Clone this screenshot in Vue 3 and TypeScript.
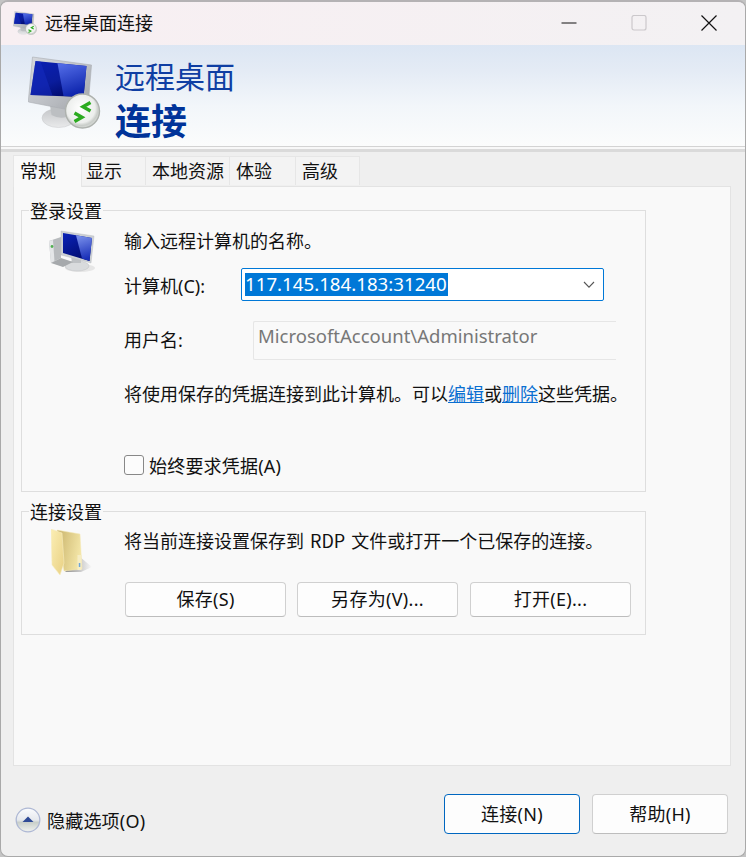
<script setup lang="ts">
interface Tab { label: string; width: number; active?: boolean }
const tabs: Tab[] = [
  { label: '常规', width: 69, active: true },
  { label: '显示', width: 64 },
  { label: '本地资源', width: 84 },
  { label: '体验', width: 66 },
  { label: '高级', width: 64 },
]
</script>

<template>
  <div class="window">
    <header class="titlebar">
      <svg class="title-icon" width="24" height="24" viewBox="0 0 73 73">
        <use href="#rdp-icon" />
      </svg>
      <span class="title">远程桌面连接</span>
      <div class="controls">
        <svg width="16" height="16" viewBox="0 0 16 16" class="ctl"><path d="M0.5 8H15.5" stroke="#111" stroke-width="1" /></svg>
        <svg width="16" height="16" viewBox="0 0 16 16" class="ctl"><rect x="1" y="0.5" width="14" height="14.5" rx="2" fill="none" stroke="#cbc8cb" stroke-width="1.2" /></svg>
        <svg width="16" height="16" viewBox="0 0 16 16" class="ctl"><path d="M0.5 0.5L15.5 15.5M15.5 0.5L0.5 15.5" stroke="#111" stroke-width="1.2" /></svg>
      </div>
    </header>

    <section class="banner">
      <svg width="74" height="73" viewBox="0 0 73 73" class="banner-icon">
        <defs>
          <linearGradient id="scr" x1="0" y1="0" x2="0.6" y2="1">
            <stop offset="0" stop-color="#0a1fb4" />
            <stop offset="0.6" stop-color="#0a1c9c" />
            <stop offset="1" stop-color="#000a6c" />
          </linearGradient>
          <linearGradient id="scrl" x1="0" y1="0" x2="0.3" y2="1">
            <stop offset="0" stop-color="#5670ea" />
            <stop offset="1" stop-color="#0f26ae" />
          </linearGradient>
          <linearGradient id="frame" x1="0" y1="0" x2="1" y2="1">
            <stop offset="0" stop-color="#d6d9de" />
            <stop offset="0.5" stop-color="#bfc2c7" />
            <stop offset="1" stop-color="#9ea1a6" />
          </linearGradient>
          <radialGradient id="disc" cx="0.45" cy="0.42" r="0.62">
            <stop offset="0" stop-color="#ffffff" />
            <stop offset="0.68" stop-color="#eceeec" />
            <stop offset="0.82" stop-color="#c9cdc9" />
            <stop offset="1" stop-color="#dfe2df" />
          </radialGradient>
          <linearGradient id="base" x1="0" y1="0" x2="0" y2="1">
            <stop offset="0" stop-color="#c4c6c9" />
            <stop offset="1" stop-color="#e9eaeb" />
          </linearGradient>
          <g id="rdp-icon">
            <ellipse cx="31" cy="62" rx="16.5" ry="9.5" fill="url(#base)" stroke="#c8cacc" stroke-width="0.5" />
            <path d="M22 46L40 50L39 61Q31 63 24 59Z" fill="#bcbfc2" />
            <path d="M5 1L64 9L61 45L52 56L1 46L1 43Z" fill="url(#frame)" stroke="#a9acb1" stroke-width="0.6" />
            <path d="M8 5L59 10L56 41L3 39Z" fill="url(#scr)" />
            <path d="M30 7.2L59 10L56 41L36 40Z" fill="url(#scrl)" />
            <path d="M8 5L13 5.5L25 39.5L3 39Z" fill="#152cc0" opacity="0.55" />
            <circle cx="55" cy="55" r="17" fill="url(#disc)" stroke="#aeb2ae" stroke-width="1.4" />
            <path d="M47 57L54.5 61.2L47 65.5M63 46.5L55.5 50.8L63 55" fill="none" stroke="#2cab20" stroke-width="3.4" />
          </g>
        </defs>
        <use href="#rdp-icon" />
      </svg>
      <div class="banner-text">
        <div class="h-light">远程桌面</div>
        <div class="h-bold">连接</div>
      </div>
    </section>
    <div class="rule"></div>

    <main class="content">
      <nav class="tabs">
        <div
          v-for="t in tabs"
          :key="t.label"
          class="tab"
          :class="{ active: t.active }"
          :style="{ width: t.width + 'px' }"
        >{{ t.label }}</div>
      </nav>

      <div class="panel">
        <fieldset class="group group-login">
          <legend>登录设置</legend>
          <svg class="pc-icon" width="50" height="46" viewBox="0 0 50 46">
            <defs>
              <linearGradient id="scr2" x1="0" y1="0" x2="0.6" y2="1">
                <stop offset="0" stop-color="#0a22b8" />
                <stop offset="1" stop-color="#000b70" />
              </linearGradient>
              <linearGradient id="scr2l" x1="0" y1="0" x2="0.2" y2="1">
                <stop offset="0" stop-color="#7f96ee" />
                <stop offset="1" stop-color="#1a30b8" />
              </linearGradient>
            </defs>
            <ellipse cx="31" cy="38" rx="15" ry="4" fill="#e6e6e6" />
            <ellipse cx="28" cy="36" rx="12" ry="5" fill="#d9dbdd" stroke="#bfc1c3" stroke-width="0.5" />
            <path d="M22 26L32 28L32 33L23 33Z" fill="#bfc2c5" />
            <path d="M0 11L12 7L12 28L2 33Z" fill="#b8bbbe" />
            <path d="M0 11L4 10L5.5 31.5L2 33Z" fill="#e4e6e8" />
            <path d="M2 33L12 28L24 32L14 37Z" fill="#a6a9ac" />
            <circle cx="3" cy="16.5" r="1.4" fill="#52b152" />
            <path d="M12 1L45 6L42 33L12 25Z" fill="#ccd0d4" stroke="#b6b9bd" stroke-width="0.4" />
            <path d="M14 3L43 8L40.5 31L14 23Z" fill="url(#scr2)" />
            <path d="M27 5.2L43 8L40.5 31L33 28.5Z" fill="url(#scr2l)" />
          </svg>

          <div class="login-body">
            <p class="intro">输入远程计算机的名称。</p>
            <div class="row row-computer">
              <label class="lbl">计算机(C):</label>
              <div class="combo">
                <span class="sel">117.145.184.183:31240</span>
                <svg width="12" height="8" viewBox="0 0 12 8" class="chev"><path d="M1 1L6 6.2L11 1" fill="none" stroke="#555" stroke-width="1.1" /></svg>
              </div>
            </div>
            <div class="row row-user">
              <label class="lbl">用户名:</label>
              <div class="user-field">MicrosoftAccount\Administrator</div>
            </div>
            <p class="saved">将使用保存的凭据连接到此计算机。可以<a class="lnk">编辑</a>或<a class="lnk">删除</a>这些凭据。</p>
            <div class="check-row">
              <span class="check"></span>
              <span class="check-label">始终要求凭据(A)</span>
            </div>
          </div>
        </fieldset>

        <fieldset class="group group-conn">
          <legend>连接设置</legend>
          <svg class="folder-icon" width="44" height="48" viewBox="0 0 44 48">
            <defs>
              <linearGradient id="fold" x1="0" y1="0" x2="1" y2="1">
                <stop offset="0" stop-color="#fbeeb4" />
                <stop offset="1" stop-color="#e9d184" />
              </linearGradient>
              <linearGradient id="foldb" x1="0" y1="0" x2="1" y2="0.3">
                <stop offset="0" stop-color="#c9b36c" />
                <stop offset="1" stop-color="#f3e5a6" />
              </linearGradient>
              <linearGradient id="fshadow" x1="0" y1="0" x2="1" y2="0">
                <stop offset="0" stop-color="#8f8f8f" />
                <stop offset="1" stop-color="#f9f9f9" />
              </linearGradient>
            </defs>
            <path d="M29 28L41 38L30 43L14 43Z" fill="url(#fshadow)" />
            <path d="M6 1L29 5L31 40L13 42Z" fill="url(#foldb)" stroke="#f4e9b8" stroke-width="0.5" />
            <path d="M0 0L11 4L13 34L9 46L1 36Z" fill="url(#fold)" stroke="#f7edc0" stroke-width="0.6" />
            <path d="M26.5 26H30.5V41H26.5Z" fill="#f6edc4" />
            <rect x="27.8" y="34" width="1.5" height="4" fill="#6fa6d8" />
          </svg>
          <div class="conn-body">
            <p class="conn-text">将当前连接设置保存到 RDP 文件或打开一个已保存的连接。</p>
            <div class="conn-btns">
              <button class="btn small">保存(S)</button>
              <button class="btn small">另存为(V)...</button>
              <button class="btn small wide">打开(E)...</button>
            </div>
          </div>
        </fieldset>
      </div>

      <footer class="footer">
        <div class="hide-opt">
          <svg width="26" height="26" viewBox="0 0 26 26">
            <defs>
              <linearGradient id="knob" x1="0" y1="0" x2="0" y2="1">
                <stop offset="0" stop-color="#fbfcfe" />
                <stop offset="0.5" stop-color="#e6e9ee" />
                <stop offset="0.6" stop-color="#c9cfca" />
                <stop offset="1" stop-color="#f0f2f0" />
              </linearGradient>
            </defs>
            <circle cx="13" cy="13" r="11.8" fill="url(#knob)" stroke="#aeb8d4" stroke-width="1.3" />
            <path d="M7.5 15L13 9.5L18.5 15Z" fill="#2f4a96" />
          </svg>
          <span class="hide-label">隐藏选项(O)</span>
        </div>
        <div class="foot-btns">
          <button class="btn big primary">连接(N)</button>
          <button class="btn big">帮助(H)</button>
        </div>
      </footer>
    </main>
  </div>
</template>

<style>
html, body { margin: 0; padding: 0; background: #c4c4c4; overflow: hidden; }
</style>

<style scoped>
.window {
  width: 746px;
  height: 857px;
  box-sizing: border-box;
  border: 1px solid #a9a9a9;
  border-top: 2px solid #b4b2b4;
  border-radius: 8px;
  overflow: hidden;
  background: #efefef;
  display: flex;
  flex-direction: column;
  font-family: "Noto Sans", "Noto Sans CJK SC", sans-serif;
  font-size: 18px;
  color: #111;
}
.titlebar {
  height: 43px;
  flex: none;
  box-sizing: border-box;
  display: flex;
  align-items: center;
  padding: 0 0 2px 12px;
  background: linear-gradient(90deg, #f8eff2, #f3f1f3);
}
.title-icon { margin-right: 8px; flex: none; }
.title { line-height: 24px; margin-bottom: 2px; font-family: "Noto Sans CJK SC", sans-serif; }
.controls {
  margin-left: auto;
  display: flex;
  gap: 54px;
  padding-right: 28px;
  align-items: center;
}
.ctl { display: block; }
.banner {
  height: 101px;
  flex: none;
  display: flex;
  align-items: flex-start;
  background: linear-gradient(180deg, #dce6f3 0%, #e4ebf5 25%, #f2f6fa 60%, #fbfcfc 100%);
  padding-left: 26px;
  box-sizing: border-box;
}
.banner-icon { margin-top: 11px; flex: none; }
.banner-text { margin-left: 14px; font-family: "Noto Sans CJK SC", sans-serif; }
.h-light { font-size: 30px; line-height: 36px; margin-top: 12px; color: #0f3ea3; }
.h-bold { font-size: 36px; line-height: 44px; margin-top: 4px; font-weight: 700; color: #003399; }
.rule {
  height: 6px;
  flex: none;
  box-sizing: border-box;
  border-top: 1px solid #d3d3d3;
  border-bottom: 3px solid #dadada;
  background: #f8f8f8;
}
.content {
  flex: 1;
  min-height: 0;
  padding: 2px 14px 0 12px;
  display: flex;
  flex-direction: column;
}
.tabs {
  display: flex;
  align-items: flex-end;
  height: 32px;
  flex: none;
  position: relative;
  z-index: 1;
}
.tab {
  box-sizing: border-box;
  height: 29px;
  margin-bottom: 1px;
  padding-left: 6px;
  border: 1px solid #e6e6e6;
  border-bottom: none;
  border-left: none;
  background: #f3f3f3;
  line-height: 26px;
  font-family: "Noto Sans CJK SC", sans-serif;
  white-space: nowrap;
}
.tab:nth-child(2) { padding-left: 4px; }
.tab.active {
  height: 32px;
  margin-bottom: -1px;
  background: #f9f9f9;
  border-left: 1px solid #e6e6e6;
  padding-left: 6px;
  line-height: 29px;
}
.panel {
  height: 580px;
  flex: none;
  box-sizing: border-box;
  background: #f9f9f9;
  border: 1px solid #e3e3e3;
  padding: 11px 0 0 7px;
  display: flex;
  flex-direction: column;
}
.group {
  margin: 0;
  padding: 0;
  width: 625px;
  box-sizing: border-box;
  border: 1px solid #dedede;
  min-width: 0;
  display: flex;
}
.group legend {
  margin-left: 7px;
  padding: 0 1px;
  line-height: 24px;
  font-family: "Noto Sans CJK SC", sans-serif;
}
.group-login { height: 294px; }
.group-conn { height: 136px; margin-top: 7px; }
.pc-icon { flex: none; margin: 8px 0 0 27px; align-self: flex-start; }
.login-body {
  margin-left: 25px;
  flex: 1;
  min-width: 0;
  display: flex;
  flex-direction: column;
}
.login-body p, .conn-body p { margin: 0; font-family: "Noto Sans CJK SC", sans-serif; }
.intro { line-height: 26px; margin-top: 5px !important; }
.row { display: flex; align-items: center; }
.row-computer { margin-top: 15px; height: 33px; }
.row-user { margin-top: 20px; height: 39px; }
.lbl { width: 117px; flex: none; font-family: "Noto Sans", "Noto Sans CJK SC", sans-serif; }
.row-user .lbl { width: 129px; margin-bottom: 4px; }
.combo {
  width: 363px;
  height: 33px;
  box-sizing: border-box;
  border: 1px solid #0078d7;
  border-radius: 2px;
  background: #fff;
  display: flex;
  align-items: center;
  padding-left: 3px;
  position: relative;
}
.sel {
  background: #0078d7;
  color: #fff;
  font-size: 18.7px;
  line-height: 21px;
  padding-bottom: 2px;
  white-space: nowrap;
  width: 203px;
  font-family: "Noto Sans", sans-serif;
}
.chev { position: absolute; right: 8px; top: 12px; }
.user-field {
  width: 363px;
  height: 39px;
  box-sizing: border-box;
  border: 1px solid #e6e6e6;
  border-right: none;
  border-radius: 2px 0 0 2px;
  color: #777;
  font-size: 18.5px;
  line-height: 27px;
  padding-left: 4px;
  white-space: nowrap;
  font-family: "Noto Sans", sans-serif;
}
.saved { margin-top: 20px !important; line-height: 26px; white-space: nowrap; }
.lnk { color: #0a6fd1; text-decoration: underline; }
.check-row {
  margin-top: 46px;
  display: flex;
  align-items: center;
  gap: 5px;
  height: 26px;
}
.check-label, .hide-label { letter-spacing: 0.2px; }
.check {
  width: 20px;
  height: 20px;
  box-sizing: border-box;
  border: 1px solid #888;
  border-radius: 3px;
  background: #fcfcfc;
  flex: none;
}
.folder-icon { flex: none; margin: 6px 0 0 29px; align-self: flex-start; }
.conn-body { margin-left: 29px; display: flex; flex-direction: column; flex: 1; min-width: 0; }
.conn-text { line-height: 26px; margin-top: 4px !important; white-space: nowrap; word-spacing: 2px; }
.conn-btns { display: flex; gap: 11px; margin-top: 29px; margin-left: 1px; }
.btn {
  box-sizing: border-box;
  font: inherit;
  letter-spacing: 0.3px;
  color: #111;
  background: #fdfdfd;
  border: 1px solid #d0d0d0;
  border-bottom-color: #bdbdbd;
  border-radius: 4px;
  padding: 0 0 2px;
  white-space: nowrap;
}
.btn.small { width: 161px; height: 35px; padding-bottom: 4px; }
.btn.wide { margin-left: 1px; }
.footer {
  flex: 1;
  display: flex;
  align-items: flex-start;
  justify-content: space-between;
  padding-right: 3px;
}
.hide-opt {
  margin-top: 41px;
  margin-left: 2px;
  display: flex;
  align-items: center;
  gap: 6px;
  height: 26px;
}
.foot-btns { display: flex; gap: 12px; margin-top: 28px; }
.btn.big { width: 136px; height: 40px; }
.btn.primary { border: 1px solid #0067c0; }
</style>
